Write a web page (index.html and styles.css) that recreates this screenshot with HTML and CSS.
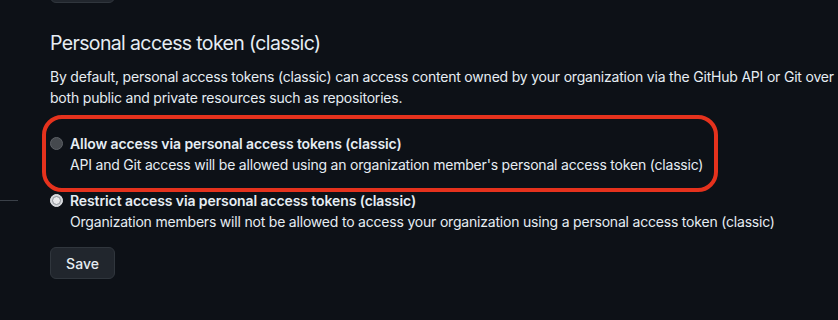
FILE: index.html
```html
<!DOCTYPE html>
<html lang="en">
<head>
<meta charset="utf-8">
<title>Personal access token (classic)</title>
<link rel="stylesheet" href="styles.css">
</head>
<body>
<div class="page">
  <aside class="sidebar"><div class="sidebar-rule"></div></aside>
  <main class="main">
    <button class="btn btn-top" type="button" aria-label="Previous section action"></button>
    <h2 class="heading">Personal access token (classic)</h2>
    <p class="desc">By default, personal access tokens (classic) can access content owned by your organization via the GitHub API or Git over<br>both public and private resources such as repositories.</p>
    <div class="options">
      <label class="option option-highlight">
        <span class="radio radio-off"></span>
        <span class="option-text">
          <span class="option-title">Allow access via personal access tokens (classic)</span>
          <span class="option-note">API and Git access will be allowed using an organization member's personal access token (classic)</span>
        </span>
        <span class="annotation"></span>
      </label>
      <label class="option">
        <span class="radio radio-on"><span class="radio-dot"></span></span>
        <span class="option-text">
          <span class="option-title">Restrict access via personal access tokens (classic)</span>
          <span class="option-note">Organization members will not be allowed to access your organization using a personal access token (classic)</span>
        </span>
      </label>
    </div>
    <button class="btn btn-save" type="button">Save</button>
  </main>
</div>
</body>
</html>
```

FILE: styles.css
```css
html, body {
  margin: 0;
  padding: 0;
  background: #0d1117;
  overflow: hidden;
}
body {
  font-family: Inter, "Liberation Sans", sans-serif;
  color: #e6edf3;
  font-size: 14px;
  line-height: 21px;
  letter-spacing: -0.2px;
}
.page {
  display: grid;
  grid-template-columns: 18px 1fr;
  column-gap: 32px;
  width: 838px;
  height: 320px;
}
.sidebar-rule {
  margin-top: 200px;
  border-top: 1px solid #3a4048;
}
.main {
  display: flex;
  flex-direction: column;
  align-items: flex-start;
  min-width: 0;
}
.btn {
  box-sizing: border-box;
  width: 65px;
  height: 32px;
  background: #21262d;
  border: 1px solid #30363d;
  border-radius: 6px;
  color: #e6edf3;
  font-family: inherit;
  font-size: 14px;
  font-weight: 500;
  letter-spacing: 0;
  padding: 0;
}
.btn-top {
  margin-top: -29px;
}
.heading {
  margin: 25px 0 0;
  font-size: 19.5px;
  font-weight: 400;
  line-height: 30px;
  letter-spacing: -0.63px;
  color: #e6edf3;
}
.desc {
  margin: 8px 0 0;
  white-space: nowrap;
}
.options {
  margin-top: 25px;
  display: flex;
  flex-direction: column;
  gap: 15px;
}
.option {
  position: relative;
  display: flex;
  align-items: flex-start;
  gap: 7px;
}
.option-text {
  display: flex;
  flex-direction: column;
  white-space: nowrap;
}
.option-title {
  font-weight: 600;
  letter-spacing: -0.1px;
}
.radio {
  box-sizing: border-box;
  width: 13px;
  height: 13px;
  margin-top: 4px;
  border-radius: 50%;
  flex: none;
  display: flex;
  align-items: center;
  justify-content: center;
}
.radio-off {
  background: #45494e;
  border: 1px solid #5d6167;
}
.radio-on {
  background: #d2d5d9;
  border: 1px solid #e4e6e9;
}
.radio-dot {
  box-sizing: border-box;
  width: 9px;
  height: 9px;
  border-radius: 50%;
  background: #e9eaec;
  border: 1px solid #8f9399;
}
.annotation {
  position: absolute;
  left: -8px;
  top: -18px;
  width: 676px;
  height: 77px;
  box-sizing: border-box;
  border: 4.5px solid #e5321d;
  border-radius: 20px;
  pointer-events: none;
}
.btn-save {
  margin-top: 15px;
}
```
